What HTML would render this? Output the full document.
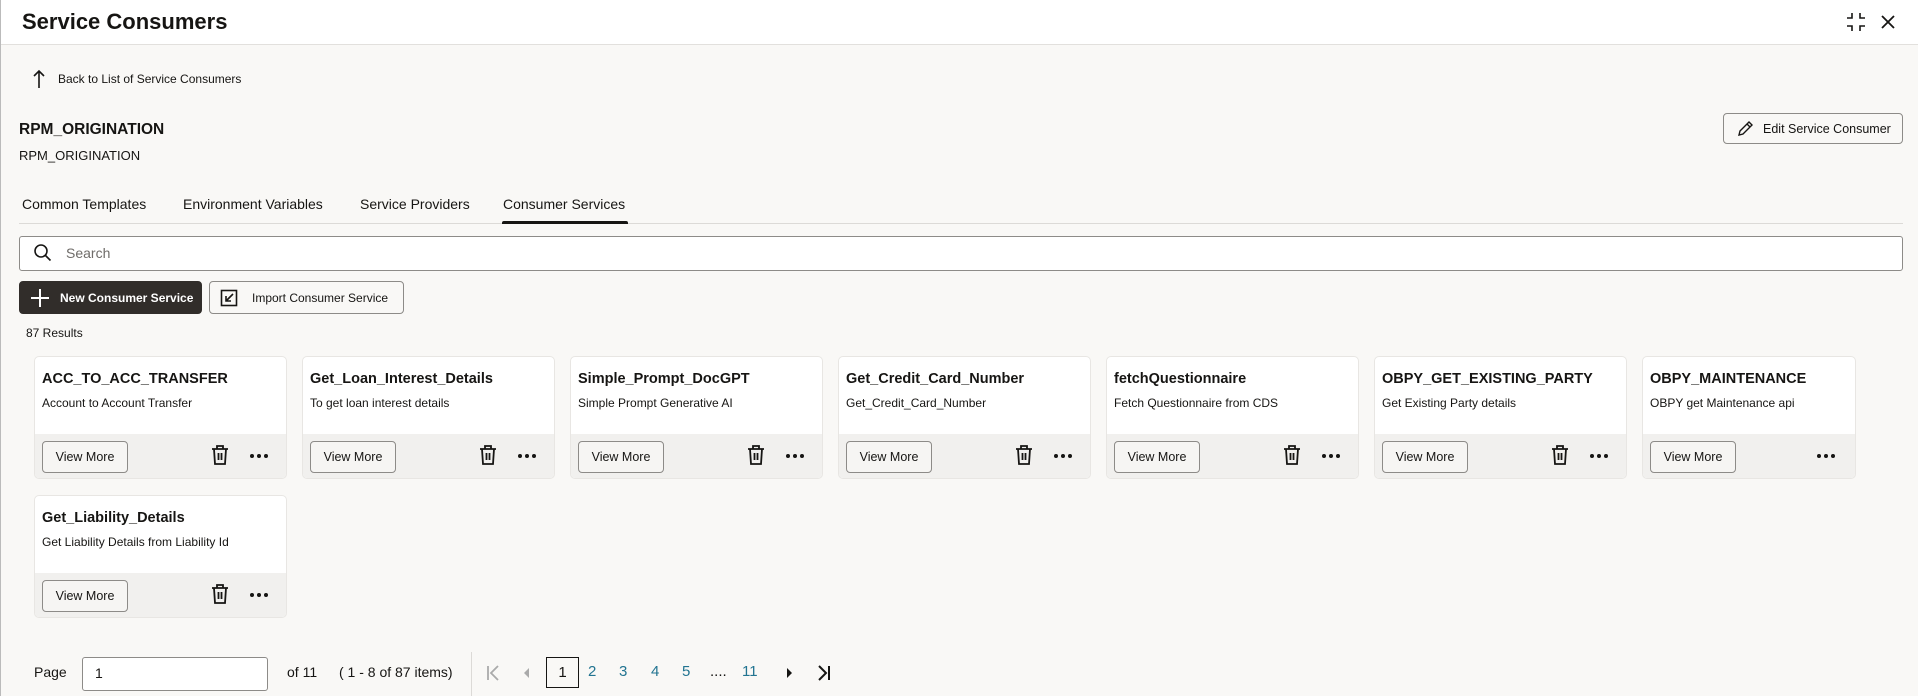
<!DOCTYPE html>
<html><head><meta charset="utf-8"><style>
*{box-sizing:border-box;margin:0;padding:0}
body{width:1918px;height:696px;overflow:hidden;background:#f9f8f6;font-family:"Liberation Sans",sans-serif;color:#161513;position:relative;border-left:1px solid #bbb}
.a{position:absolute;white-space:nowrap}
.hdr{position:absolute;left:0;top:0;width:1918px;height:45px;background:#fff;border-bottom:1px solid #e2e0dd}
.btn{position:absolute;border:1px solid #8d8b88;border-radius:4px;background:#f9f8f6;font-size:12.5px;display:flex;align-items:center}
.card{position:absolute;width:253px;height:123px;background:#fff;border:1px solid #e8e6e3;border-radius:5px;overflow:hidden}
.card .t{position:absolute;left:7px;top:14px;font-size:14.5px;font-weight:bold;white-space:nowrap}
.card .d{position:absolute;left:7px;top:39px;font-size:12px;white-space:nowrap}
.card .f{position:absolute;left:0;top:77px;width:100%;height:46px;background:#f1f0ee}
.card .vm{position:absolute;left:7px;top:7px;width:86px;height:32px;border:1px solid #8d8b88;border-radius:4px;background:#f6f5f3;font-size:12.5px;display:flex;align-items:center;justify-content:center}
.card svg{position:absolute}
.pg{font-size:15px;color:#227491;top:663px}
</style></head><body>
<div class="hdr"></div>
<div class="a" style="left:21px;top:9px;font-size:22px;font-weight:bold">Service Consumers</div>
<svg class="a" style="left:1845px;top:12px" width="20" height="20" viewBox="0 0 20 20" fill="none" stroke="#161513" stroke-width="1.6"><path d="M6 1v5H1M14 1v5h5M6 19v-5H1M14 19v-5h5"/></svg>
<svg class="a" style="left:1879px;top:14px" width="16" height="16" viewBox="0 0 16 16" stroke="#161513" stroke-width="1.8"><path d="M2 2l12 12M14 2L2 14"/></svg>
<svg class="a" style="left:31px;top:69px" width="14" height="20" viewBox="0 0 14 20" fill="none" stroke="#161513" stroke-width="1.6"><path d="M7 19V2M2 7l5-5 5 5"/></svg>
<div class="a" style="left:57px;top:72px;font-size:12px">Back to List of Service Consumers</div>
<div class="a" style="left:18px;top:121px;font-size:15.5px;font-weight:bold">RPM_ORIGINATION</div>
<div class="a" style="left:18px;top:148px;font-size:13px">RPM_ORIGINATION</div>
<div class="btn" style="left:1722px;top:113px;width:180px;height:31px;padding-left:12px"><svg width="18" height="18" viewBox="0 0 18 18" fill="none" stroke="#161513" stroke-width="1.4"><path d="M3 15l1-4 9-9 3 3-9 9z M11 4l3 3"/></svg><span style="margin-left:9px">Edit Service Consumer</span></div>
<div class="a" style="left:21px;top:196px;font-size:14px">Common Templates</div>
<div class="a" style="left:182px;top:196px;font-size:14px">Environment Variables</div>
<div class="a" style="left:359px;top:196px;font-size:14px">Service Providers</div>
<div class="a" style="left:502px;top:196px;font-size:14px">Consumer Services</div>
<div class="a" style="left:18px;top:223px;width:1884px;height:1px;background:#dcdad7"></div>
<div class="a" style="left:501px;top:221px;width:126px;height:3px;background:#161513;border-radius:2px 2px 0 0"></div>
<div class="a" style="left:18px;top:236px;width:1884px;height:35px;background:#fff;border:1px solid #8d8b88;border-radius:3px"></div>
<svg class="a" style="left:32px;top:243px" width="20" height="20" viewBox="0 0 20 20" fill="none" stroke="#161513" stroke-width="1.6"><circle cx="8" cy="8" r="6"/><path d="M12.5 12.5l5 5"/></svg>
<div class="a" style="left:65px;top:245px;font-size:14px;color:#6f6c69">Search</div>
<div class="btn" style="left:18px;top:281px;width:183px;height:33px;background:#312d2a;border-color:#312d2a;color:#fff;font-weight:bold;padding-left:10px"><svg width="20" height="20" viewBox="0 0 20 20" stroke="#fff" stroke-width="2"><path d="M10 1v18M1 10h18"/></svg><span style="margin-left:10px;font-size:12px">New Consumer Service</span></div>
<div class="btn" style="left:208px;top:281px;width:195px;height:33px;padding-left:10px"><svg width="18" height="18" viewBox="0 0 18 18" fill="none" stroke="#161513" stroke-width="1.6"><rect x="1.5" y="1.5" width="15" height="15"/><path d="M13 5l-7 7M6 7v5h5"/></svg><span style="margin-left:14px;font-size:12px">Import Consumer Service</span></div>
<div class="a" style="left:25px;top:326px;font-size:12px">87 Results</div>

<div id="cards"></div>
<script>
var d=[["ACC_TO_ACC_TRANSFER","Account to Account Transfer"],["Get_Loan_Interest_Details","To get loan interest details"],["Simple_Prompt_DocGPT","Simple Prompt Generative AI"],["Get_Credit_Card_Number","Get_Credit_Card_Number"],["fetchQuestionnaire","Fetch Questionnaire from CDS"],["OBPY_GET_EXISTING_PARTY","Get Existing Party details"],["OBPY_MAINTENANCE","OBPY get Maintenance api"],["Get_Liability_Details","Get Liability Details from Liability Id"]];
var h="";
var trash='<svg style="left:175px;top:10px" width="20" height="22" viewBox="0 0 20 22" fill="none" stroke="#161513" stroke-width="1.8"><path d="M2 5h16M7 5V2h6v3M4 5l1 15h10l1-15M8.5 9v7M11.5 9v7"/></svg>';
function dots(x){return '<svg style="left:'+x+'px;top:19px" width="20" height="6" viewBox="0 0 20 6" fill="#161513"><circle cx="3" cy="3" r="2"/><circle cx="10" cy="3" r="2"/><circle cx="17" cy="3" r="2"/></svg>';}
d.forEach(function(c,i){var x=i<7?33+268*i:33,y=i<7?356:495,w=i==6?214:253;
h+='<div class="card" style="left:'+x+'px;top:'+y+'px;width:'+w+'px"><div class="t">'+c[0]+'</div><div class="d">'+c[1]+'</div><div class="f"><div class="vm">View More</div>'+(i==6?dots(173):trash+dots(214))+'</div></div>';});
document.getElementById("cards").innerHTML=h;
</script>

<div class="a" style="left:33px;top:664px;font-size:14px">Page</div>
<div class="a" style="left:81px;top:657px;width:186px;height:34px;background:#fff;border:1px solid #8d8b88;border-radius:3px;font-size:14px;padding:7px 0 0 12px">1</div>
<div class="a" style="left:286px;top:664px;font-size:14px">of 11</div>
<div class="a" style="left:338px;top:664px;font-size:14px">( 1 - 8 of 87 items)</div>
<div class="a" style="left:470px;top:652px;width:1px;height:44px;background:#dcdad7"></div>
<svg class="a" style="left:484px;top:664px" width="16" height="18" viewBox="0 0 16 18" fill="none" stroke="#aaa" stroke-width="1.8"><path d="M3 2v14M13 2L6 9l7 7"/></svg>
<svg class="a" style="left:520px;top:665px" width="10" height="16" viewBox="0 0 10 16" fill="#aaa"><path d="M8 3v10L3 8z"/></svg>
<div class="a" style="left:545px;top:657px;width:33px;height:31px;border:1px solid #161513;font-size:15px;text-align:center;padding-top:6px">1</div>
<div class="a pg" style="left:587px">2</div>
<div class="a pg" style="left:618px">3</div>
<div class="a pg" style="left:650px">4</div>
<div class="a pg" style="left:681px">5</div>
<div class="a" style="left:709px;top:663px;font-size:15px">....</div>
<div class="a pg" style="left:741px">11</div>
<svg class="a" style="left:784px;top:665px" width="10" height="16" viewBox="0 0 10 16" fill="#161513"><path d="M2 3v10l5-5z"/></svg>
<svg class="a" style="left:815px;top:664px" width="16" height="18" viewBox="0 0 16 18" fill="none" stroke="#161513" stroke-width="2"><path d="M3 2l7 7-7 7M13 2v14"/></svg>
</body></html>
